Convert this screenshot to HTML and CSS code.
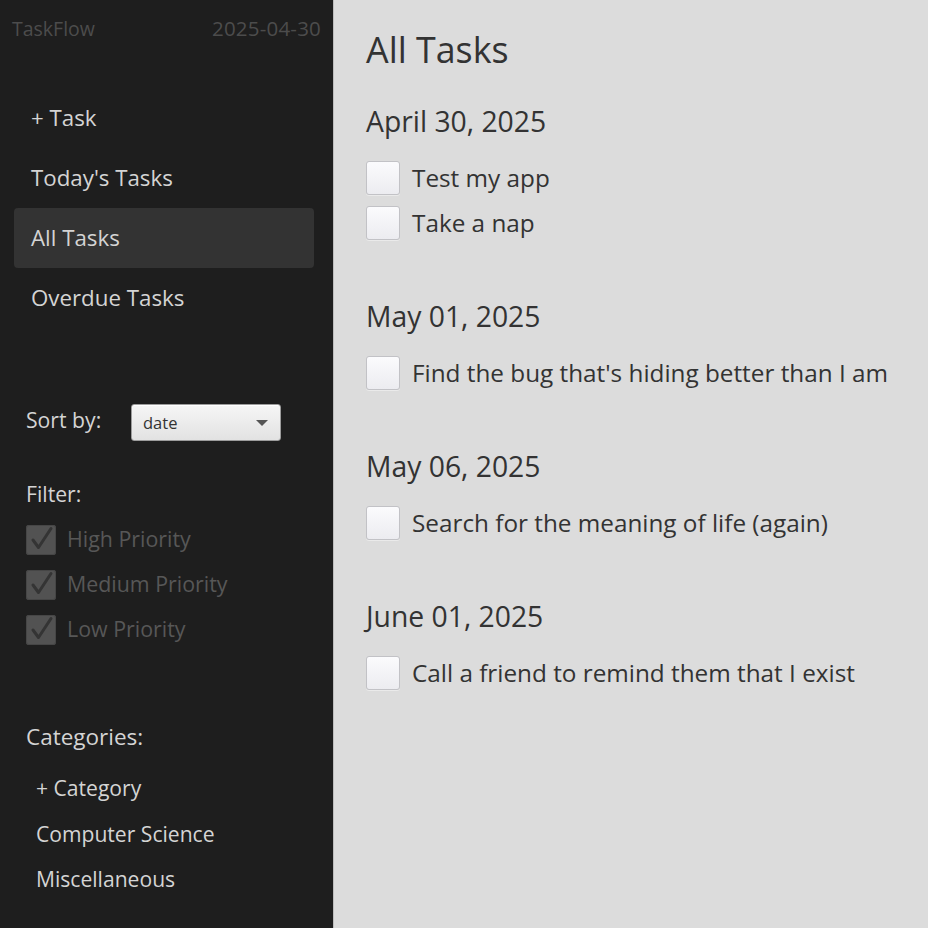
FILE: index.html
```html
<!DOCTYPE html>
<html>
<head>
<meta charset="utf-8">
<title>TaskFlow</title>
<link rel="stylesheet" href="styles.css">
</head>
<body>
<div class="app">
  <aside class="sidebar">
    <div class="brand-row">
      <span class="brand">TaskFlow</span>
      <span class="today">2025-04-30</span>
    </div>
    <nav class="nav">
      <div class="nav-item">+ Task</div>
      <div class="nav-item">Today's Tasks</div>
      <div class="nav-item active">All Tasks</div>
      <div class="nav-item">Overdue Tasks</div>
    </nav>
    <div class="sort-row">
      <span class="side-label sort-label">Sort by:</span>
      <div class="combo">
        <span>date</span>
        <span class="combo-arrow"></span>
      </div>
    </div>
    <div class="side-label filter-label">Filter:</div>
    <div class="filters">
      <div class="filter-item"><span class="dark-check"><svg viewBox="0 0 30 30" width="30" height="30"><path d="M7 15 L12.5 22.5 L25 3.5" fill="none" stroke="#343434" stroke-width="3" stroke-linecap="round" stroke-linejoin="round"/></svg></span><span>High Priority</span></div>
      <div class="filter-item"><span class="dark-check"><svg viewBox="0 0 30 30" width="30" height="30"><path d="M7 15 L12.5 22.5 L25 3.5" fill="none" stroke="#343434" stroke-width="3" stroke-linecap="round" stroke-linejoin="round"/></svg></span><span>Medium Priority</span></div>
      <div class="filter-item"><span class="dark-check"><svg viewBox="0 0 30 30" width="30" height="30"><path d="M7 15 L12.5 22.5 L25 3.5" fill="none" stroke="#343434" stroke-width="3" stroke-linecap="round" stroke-linejoin="round"/></svg></span><span>Low Priority</span></div>
    </div>
    <div class="side-label cat-label">Categories:</div>
    <div class="categories">
      <div class="cat-item">+ Category</div>
      <div class="cat-item">Computer Science</div>
      <div class="cat-item">Miscellaneous</div>
    </div>
  </aside>
  <main class="main">
    <h1 class="title">All Tasks</h1>
    <section class="group">
      <h2 class="date">April 30, 2025</h2>
      <div class="task"><span class="box"></span><span>Test my app</span></div>
      <div class="task"><span class="box"></span><span>Take a nap</span></div>
    </section>
    <section class="group">
      <h2 class="date">May 01, 2025</h2>
      <div class="task"><span class="box"></span><span>Find the bug that's hiding better than I am</span></div>
    </section>
    <section class="group">
      <h2 class="date">May 06, 2025</h2>
      <div class="task"><span class="box"></span><span>Search for the meaning of life (again)</span></div>
    </section>
    <section class="group">
      <h2 class="date">June 01, 2025</h2>
      <div class="task"><span class="box"></span><span>Call a friend to remind them that I exist</span></div>
    </section>
  </main>
</div>
</body>
</html>
```

FILE: styles.css
```css
* { box-sizing: border-box; }
html, body {
  margin: 0;
  padding: 0;
  height: 100%;
}
body {
  font-family: "Open Sans", "Noto Sans", sans-serif;
  background: #dcdcdc;
}
.app {
  display: flex;
  height: 928px;
  overflow: hidden;
}
.sidebar {
  width: 333px;
  flex: none;
  background: #1e1e1e;
  color: #d4d4d4;
}
.brand-row {
  display: flex;
  justify-content: space-between;
  align-items: center;
  height: 56px;
  padding: 0 12px;
  font-size: 19.5px;
  color: #4c4c4c;
}
.today { font-size: 20.5px; letter-spacing: 0.2px; }
.nav {
  margin: 32px 19px 0 14px;
}
.nav-item {
  height: 60px;
  line-height: 60px;
  padding-left: 17px;
  font-size: 22.3px;
  border-radius: 4px;
  color: #d4d4d4;
}
.nav-item.active {
  background: #333333;
}
.sort-row {
  display: flex;
  align-items: center;
  margin-top: 76px;
  padding-left: 26px;
  height: 37px;
}
.side-label {
  font-size: 21.2px;
  line-height: 30px;
  color: #d4d4d4;
}
.sort-label {
  width: 105px;
  margin-top: -6px;
}
.combo {
  width: 150px;
  height: 37px;
  display: flex;
  align-items: center;
  justify-content: space-between;
  padding: 0 12px 0 11px;
  border: 1px solid #9c9c9c;
  border-radius: 3px;
  background: linear-gradient(#f6f6f6, #e2e2e2);
  box-shadow: inset 0 1px 0 #fff;
  font-size: 16.5px;
  color: #333;
}
.combo-arrow {
  width: 0;
  height: 0;
  border-left: 6px solid transparent;
  border-right: 6px solid transparent;
  border-top: 6px solid #555;
}
.filter-label {
  margin-top: 38px;
  padding-left: 26px;
}
.cat-label { font-size: 22.5px; }
.filters {
  margin-top: 8px;
  padding-left: 26px;
}
.filter-item {
  display: flex;
  align-items: center;
  height: 45px;
  gap: 11px;
  font-size: 21.4px;
  color: #575757;
}
.filter-item span:last-child { margin-top: -2px; }
.dark-check {
  width: 30px;
  height: 30px;
  border-radius: 3px;
  background: #525252;
  box-shadow: inset 0 0 0 1px #464646;
  display: block;
}
.dark-check svg { display: block; }
.cat-label {
  margin-top: 70px;
  padding-left: 26px;
}
.categories {
  margin-top: 13px;
  padding-left: 36px;
}
.cat-item {
  height: 45.5px;
  line-height: 45.5px;
  font-size: 21.1px;
  color: #d4d4d4;
}
.main {
  flex: 1;
  border-left: 1px solid #bdbdbd;
  padding: 27px 0 0 32px;
  color: #333;
}
.title {
  margin: 0;
  font-size: 35.8px;
  line-height: 44px;
  font-weight: 400;
}
.group {
  margin-bottom: 53px;
}
.date {
  margin: 32px 0 16px;
  font-size: 28.3px;
  line-height: 36px;
  font-weight: 400;
}
.group + .group .date { margin-top: 0; }
.task {
  display: flex;
  align-items: center;
  height: 45px;
  gap: 12px;
  font-size: 24.3px;
}
.task span:last-child { margin-top: -1px; }
.box {
  width: 34px;
  height: 34px;
  border-radius: 3px;
  border: 1px solid #c2c2c6;
  background: linear-gradient(#fbfbfd, #ececf0);
  box-shadow: 0 1px 0 #eaeaea;
}
```
